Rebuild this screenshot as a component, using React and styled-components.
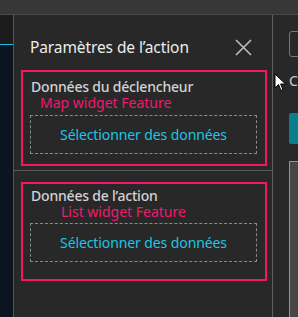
import React from "react";
import styled, { createGlobalStyle } from "styled-components";

const Global = createGlobalStyle`
  html, body { margin: 0; padding: 0; background: #282828; }
  body { width: 298px; height: 317px; overflow: hidden; font-family: "Noto Sans", "Open Sans", sans-serif; }
  * { box-sizing: border-box; }
`;

const Page = styled.div`
  position: relative;
  width: 298px;
  height: 317px;
  display: flex;
  flex-direction: column;
  overflow: hidden;
`;

const TopBar = styled.div`
  height: 15px;
  flex: none;
  background: #373737;
  border-bottom: 1px solid #4a4a4a;
`;

const Body = styled.div`
  flex: 1;
  display: flex;
  min-height: 0;
`;

const LeftStrip = styled.div`
  width: 14px;
  flex: none;
  display: flex;
  flex-direction: column;
  border-right: 1px solid #565656;
`;

const LeftTop = styled.div`
  height: 30px;
  background: #1b1b1b;
  border-bottom: 1px solid #1cc2e2;
`;

const LeftBottom = styled.div`
  flex: 1;
  background: #0b1420;
`;

const Panel = styled.div`
  width: 259px;
  flex: none;
  background: #282828;
  border-right: 1px solid #606060;
  display: flex;
  flex-direction: column;
`;

const Header = styled.div`
  display: flex;
  align-items: center;
  justify-content: space-between;
  height: 55px;
  padding: 8px 20px 0 16px;
`;

const Title = styled.div`
  color: #ececec;
  font-size: 15.5px;
  letter-spacing: -0.1px;
`;

const Close = styled.svg`
  width: 18px;
  height: 18px;
`;

const Section = styled.div`
  padding: ${p => p.$pad};
  border-bottom: ${p => (p.$divider ? "1px solid #5a5a5a" : "none")};
`;

const Card = styled.div`
  border: 2px solid #f5166c;
  padding: ${p => p.$top}px 8px ${p => p.$bottom}px 7px;
  display: flex;
  flex-direction: column;
`;

const Label = styled.div`
  color: #d2d2d2;
  font-size: 14px;
  font-weight: 500;
  letter-spacing: -0.2px;
  line-height: 17px;
  padding-left: 1px;
`;

const Note = styled.div`
  color: #ef1a6e;
  font-size: 14px;
  line-height: 15px;
  padding-left: ${p => p.$indent}px;
  margin-bottom: ${p => p.$gap}px;
`;

const DropZone = styled.div`
  height: 39px;
  border: 1px dashed #8a8a8a;
  display: flex;
  align-items: center;
  justify-content: center;
  color: #1fc4e6;
  font-size: 14px;
  letter-spacing: -0.1px;
`;

const RightStrip = styled.div`
  flex: 1;
  display: flex;
  flex-direction: column;
  padding-left: 16px;
  padding-top: 16px;
  overflow: hidden;
`;

const IconBox = styled.div`
  width: 20px;
  height: 26px;
  border: 1px solid #777;
  border-radius: 3px;
  flex: none;
`;

const EdgeText = styled.div`
  color: #cfcfcf;
  font-size: 14px;
  line-height: 16px;
  margin-top: 16px;
  white-space: nowrap;
  flex: none;
`;

const TealBlock = styled.div`
  height: 31px;
  margin-top: 24px;
  background: #0a7e8e;
  border-radius: 2px 0 0 2px;
  flex: none;
`;

const InputBox = styled.div`
  flex: 1;
  margin-top: 17px;
  background: #474747;
  border-left: 1px solid #1ec0e0;
  border-top: 1px solid #1ec0e0;
`;

const Cursor = styled.svg`
  position: absolute;
  left: 274px;
  top: 73px;
  width: 13px;
  height: 19px;
`;

function DataCard({ label, note, indent, top, gap, bottom }) {
  return (
    <Card $top={top} $bottom={bottom}>
      <Label>{label}</Label>
      <Note $indent={indent} $gap={gap}>{note}</Note>
      <DropZone>Sélectionner des données</DropZone>
    </Card>
  );
}

export default function App() {
  return (
    <>
      <Global />
      <Page>
        <TopBar />
        <Body>
          <LeftStrip>
            <LeftTop />
            <LeftBottom />
          </LeftStrip>
          <Panel>
            <Header>
              <Title>Paramètres de l’action</Title>
              <Close viewBox="0 0 18 18">
                <path d="M2 2 L17 17 M17 2 L2 17" stroke="#bdbdbd" strokeWidth="1.6" fill="none" />
              </Close>
            </Header>
            <Section $pad="0 5px 4px 7px" $divider>
              <DataCard label="Données du déclencheur" note="Map widget Feature" indent={10} top={6} gap={5} bottom={10} />
            </Section>
            <Section $pad="11px 5px 0 7px">
              <DataCard label="Données de l’action" note="List widget Feature" indent={31} top={3} gap={4} bottom={17} />
            </Section>
          </Panel>
          <RightStrip>
            <IconBox />
            <EdgeText>C</EdgeText>
            <TealBlock />
            <InputBox />
          </RightStrip>
        </Body>
        <Cursor viewBox="0 0 13 19">
          <path d="M1 1 L1 15 L4.5 11.5 L7 17.5 L9 16.6 L6.6 11 L11.5 11 Z" fill="#fff" stroke="#000" strokeWidth="1" strokeLinejoin="round" />
        </Cursor>
      </Page>
    </>
  );
}
